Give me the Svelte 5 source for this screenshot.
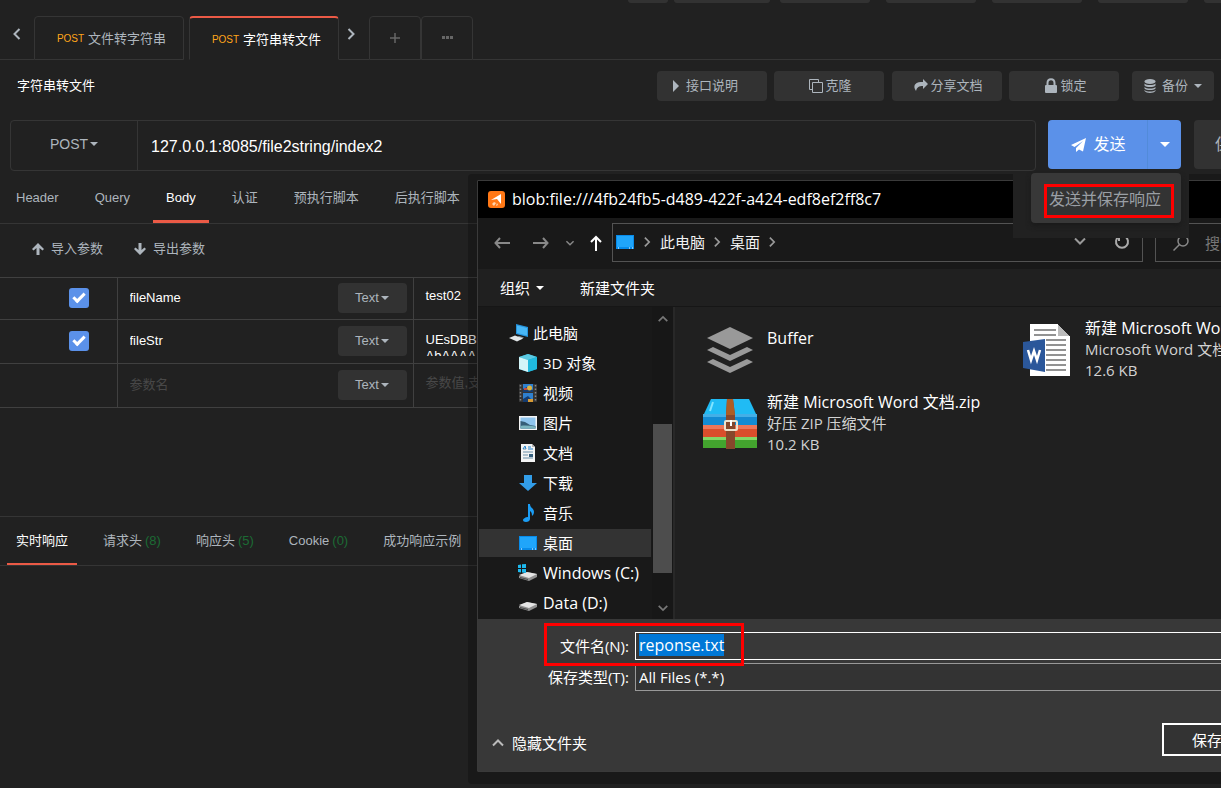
<script>
  import { onMount } from 'svelte';

  let fileInput;
  const peeks = [40, 96, 90, 90, 90, 90, 90];
  const bodyTabs = ['Header', 'Query', 'Body', '认证', '预执行脚本', '后执行脚本'];
  const responseTabs = [
    { name: '实时响应', active: true },
    { name: '请求头', count: 8 },
    { name: '响应头', count: 5 },
    { name: 'Cookie', count: 0 },
    { name: '成功响应示例' }
  ];
  const rows = [
    { name: 'fileName', value: 'test02', checked: true },
    { name: 'fileStr', value: 'UEsDBBQAA\nAbAAAAAAA', checked: true },
    { name: '', value: '', checked: false }
  ];
  const places = [
    { name: '此电脑', icon: 'pc', root: true },
    { name: '3D 对象', icon: 'cube' },
    { name: '视频', icon: 'video' },
    { name: '图片', icon: 'picture' },
    { name: '文档', icon: 'doc' },
    { name: '下载', icon: 'down' },
    { name: '音乐', icon: 'music' },
    { name: '桌面', icon: 'desktop', active: true },
    { name: 'Windows (C:)', icon: 'win', drive: true },
    { name: 'Data (D:)', icon: 'disk', drive: true }
  ];

  onMount(() => {
    fileInput.focus({ preventScroll: true });
    fileInput.select();
  });
</script>

{#snippet chevron(dir, size = 14)}
  <svg class="chev" width={size} height={size} viewBox="0 0 14 14" fill="none" stroke="currentColor" stroke-width="2" aria-hidden="true">
    {#if dir === 'left'}<path d="M9.500 2 4.500 7l5 5" />
    {:else if dir === 'right'}<path d="m4.500 2 5 5-5 5" />
    {:else if dir === 'up'}<path d="m2 9.500 5-5 5 5" />
    {:else}<path d="m2 4.500 5 5 5-5" />{/if}
  </svg>
{/snippet}

{#snippet placeIcon(kind)}
  <svg width="20" height="20" viewBox="0 0 20 20" aria-hidden="true">
    {#if kind === 'pc'}
      <path d="m7 1 12 3v10L7 11z" fill="#2493dc" /><path d="m8 2.500 10 2.500v7.500L8 10z" fill="#48b6f5" />
      <path d="m10 13 5 1.500-3 2-5-1.500z" fill="#8b9499" /><path d="m0 15 6-2.500 8 3-6 3z" fill="#e2e6e8" />
    {:else if kind === 'cube'}
      <path d="m10 1 9 3v12l-9 3-9-3V4z" fill="#19a8cd" /><path d="m10 1 9 3-9 3-9-3z" fill="#5bc9e2" />
      <path d="M1 4l9 3v12l-9-3z" fill="#d3f4f8" /><path d="m10 7 9-3v12l-9 3z" fill="#20b9dd" />
    {:else if kind === 'video'}
      <path d="M1 1h18v18H1z" fill="#343434" /><path d="M5 1h10v8H5zm0 9h10v9H5z" fill="#2f80ce" />
      <path d="M5 6l4-2 6 3v2H5zm0 10 5-3 5 5v1H5z" fill="#153c6f" /><circle cx="11.500" cy="5" r="2.500" fill="#dfb53f" /><path d="M10 16h5v3h-5z" fill="#d89b36" /><path d="M6 5h3v2H6z" fill="#c74943" />
      <path d="M2.500 2v17M17.500 2v17" stroke="#888" stroke-width="1.500" stroke-dasharray="1.500 2" />
    {:else if kind === 'picture'}
      <path d="M1 3h18v14H1z" fill="#f5f5f5" /><path d="M2.500 4.500h15v11h-15z" fill="#8fc5ee" />
      <path d="M2.500 8 7 9l5 3 5.500 1v2.500h-15z" fill="#365e78" /><path d="M2.500 13c5-1 10 0 15 .500v2h-15z" fill="#7bb5bf" />
    {:else if kind === 'doc'}
      <path d="M3 1h11l3 3v15H3z" fill="#f4f4f4" /><path d="M14 1v3h3z" fill="#b5b5b5" />
      <path d="M5 6h3M5 9h10M5 12h5M5 15h10" stroke="#6b8fa8" /><path d="m5 6 2-3 1 3M10 4h3M10 6h5" stroke="#2083cf" fill="none" /><path d="M11 11h4v3h-4z" fill="#345e7c" />
    {:else if kind === 'down'}
      <path d="M6 2h8v8h5l-9 8-9-8h5z" fill="#329de8" />
    {:else if kind === 'music'}
      <path d="M10 1h2c0 4 4 4 4 8 0 2-1 3-2 4 0-4-1-4-2-5v8c0 2-2 3-4 3s-3-1-3-2 2-3 5-3z" fill="#1b9df4" />
    {:else if kind === 'desktop'}
      <path d="M1 3h18v14H1z" fill="#078bea" /><path d="M2 4h16v11H2z" fill="#20a5fa" /><path d="M3 16h1M14 16h1M17 16h1" stroke="#fff" />
    {:else}
      <path d="m1 13 8-4 10 2v3l-8 4-10-3z" fill="#919191" /><path d="m1 12 8-3 10 2-8 4z" fill="#e6e6e6" /><path d="m2 14 8 2v1l-8-2z" fill="#4b4b4b" />
      {#if kind === 'win'}<path d="m0 2 3-.500v3.500H0zm4-.700L8 1v4H4zM0 6h3v3.500L0 9zm4 0h4v4l-4-.500z" fill="#1cb8ee" />{/if}
    {/if}
  </svg>
{/snippet}

<main class="client">
  <div class="peeks" aria-hidden="true">
    {#each peeks as width}<i style:width="{width}px"></i>{/each}
  </div>

  <nav class="tabs" aria-label="接口">
    <button class="arrow prev" aria-label="向左">{@render chevron('left')}</button>
    <button class="tab"><b>POST</b><span>文件转字符串</span></button>
    <button class="tab current"><b>POST</b><span>字符串转文件</span></button>
    <button class="arrow next" aria-label="向右">{@render chevron('right')}</button>
    <button class="mini" aria-label="新建"><svg width="10" height="10" viewBox="0 0 10 10" stroke="currentColor" stroke-width="1.500"><path d="M5 0v10M0 5h10" /></svg></button>
    <button class="mini more" aria-label="更多"><svg width="12" height="4" viewBox="0 0 12 4" fill="currentColor"><path d="M1 0h3v3H1zm4 0h3v3H5zm4 0h3v3H9z" /></svg></button>
    <div class="rest"></div>
  </nav>

  <header class="heading">
    <h1>字符串转文件</h1>
    <div class="actions">
      <button><svg width="8" height="12" viewBox="0 0 8 12" fill="currentColor"><path d="m1 0 6 6-6 6z" /></svg><span>接口说明</span></button>
      <button class="tight"><svg width="14" height="14" viewBox="0 0 14 14" fill="none" stroke="currentColor"><path d="M3.500 10.500h-3V.500h9v3M3.500 3.500h10v10h-10z" /></svg><span>克隆</span></button>
      <button class="tight share"><svg width="14" height="13" viewBox="0 0 14 13" fill="currentColor"><path d="m9 0 5 5-5 5V7C5 7 3 8 2 12 0 9 0 7 1 5.500 3 3 6 3 9 3z" /></svg><span>分享文档</span></button>
      <button class="tight"><svg width="14" height="16" viewBox="0 0 14 16"><path d="M3.500 8V5c0-5 7-5 7 0v3" stroke="currentColor" stroke-width="2" fill="none" /><rect x="1" y="7" width="12" height="8" rx="1" fill="currentColor" /></svg><span>锁定</span></button>
      <button class="backup"><svg width="12" height="14" viewBox="0 0 12 14" fill="currentColor"><ellipse cx="6" cy="2.500" rx="5.500" ry="2.500" /><path d="M.500 4.500c2 2 9 2 11 0v2c-2 2-9 2-11 0zm0 3.500c2 2 9 2 11 0v1.500c-2 2-9 2-11 0zm0 3c2 2 9 2 11 0v1c-2 2.500-9 2.500-11 0z" /></svg><span>备份</span><i class="caret"></i></button>
    </div>
  </header>

  <section class="request">
    <div class="address">
      <button class="method">POST<i class="caret"></i></button>
      <input aria-label="请求地址" value="127.0.0.1:8085/file2string/index2" />
    </div>
    <div class="send-group">
      <button class="send"><svg width="16" height="14" viewBox="0 0 16 14" fill="currentColor"><path d="M15 0 0 7l3.500 2L12 3 5 10v4l3-2.500 4 2z" /></svg><span>发送</span></button>
      <button class="send-more" aria-label="更多发送方式"><i class="caret"></i></button>
      <div class="menu"><div class="menu-panel"><button>发送并保存响应</button></div></div>
    </div>
    <button class="save">保存</button>
  </section>

  <nav class="body-tabs">
    {#each bodyTabs as tab}<button class:active={tab === 'Body'}>{tab}</button>{/each}
  </nav>

  <div class="transfer">
    <button><svg width="12" height="12" viewBox="0 0 12 12" fill="currentColor"><path d="m6 0 6 6-1.500 1.500L7.500 5v7h-3V5l-3 2.500L0 6z" /></svg>导入参数</button>
    <button><svg width="12" height="12" viewBox="0 0 12 12" fill="currentColor"><path d="m6 12 6-6-1.500-1.500-3 2.500V0h-3v7l-3-2.500L0 6z" /></svg>导出参数</button>
  </div>

  <table class="params">
    <tbody>
      {#each rows as row, i}
        <tr>
          <td class="check">{#if row.name}<input type="checkbox" checked={row.checked} aria-label="启用 {row.name}" />{/if}</td>
          <td class="name"><div><input value={row.name} placeholder="参数名" aria-label="参数名 {i + 1}" /><button>Text<i class="caret"></i></button></div></td>
          <td class="value"><textarea class:long={i === 1} value={row.value} placeholder="参数值,支持mock字段变量" aria-label="参数值 {i + 1}"></textarea></td>
        </tr>
      {/each}
    </tbody>
  </table>

  <nav class="response-tabs">
    {#each responseTabs as tab}
      <button class:active={tab.active}>{tab.name}{#if tab.count !== undefined}<em>({tab.count})</em>{/if}</button>
    {/each}
  </nav>
</main>

<section class="dialog" aria-label="另存为">
  <header class="caption">
    <svg width="18" height="18" viewBox="0 0 18 18"><rect x="0" y="1" width="17" height="17" rx="3" fill="#ff7816" /><path d="M13 4v10L9 9l-6 1z" fill="#fff" /><path d="m6 12 2 1-2 3-2-2zm3 1 1 2-2 1z" fill="#ffd4ae" /></svg>
    <span>blob:file:///4fb24fb5-d489-422f-a424-edf8ef2ff8c7</span>
  </header>
  <div class="navigation">
    <div class="history">
      <button aria-label="后退"><svg width="16" height="14" viewBox="0 0 16 14" fill="none" stroke="currentColor" stroke-width="2"><path d="M6 2 1.500 7 6 12M1.500 7H16" /></svg></button>
      <button aria-label="前进"><svg width="16" height="14" viewBox="0 0 16 14" fill="none" stroke="currentColor" stroke-width="2"><path d="m10 2 4.500 5-4.500 5M14.500 7H0" /></svg></button>
      <button aria-label="最近">{@render chevron('down', 10)}</button>
      <button class="up" aria-label="向上"><svg width="12" height="16" viewBox="0 0 12 16" fill="none" stroke="currentColor" stroke-width="2"><path d="M1 7 6 2l5 5M6 2v14" /></svg></button>
    </div>
    <div class="path">
      {@render placeIcon('desktop')}
      {@render chevron('right', 12)}<span>此电脑</span>
      {@render chevron('right', 12)}<span>桌面</span>
      {@render chevron('right', 12)}
      <div class="path-end">{@render chevron('down', 14)}
        <svg width="16" height="16" viewBox="0 0 16 16" fill="none" stroke="currentColor" stroke-width="2"><path d="M11 2.500A6 6 0 1 1 5 2.500M5 7V2H1" /></svg>
      </div>
    </div>
    <label class="search"><svg width="16" height="16" viewBox="0 0 16 16" fill="none" stroke="currentColor" stroke-width="1.500"><circle cx="10" cy="6" r="5" /><path d="m6.500 9.500-6 6" /></svg><input placeholder="搜索" aria-label="搜索" /></label>
  </div>
  <div class="commands"><button>组织<i class="caret"></i></button><button>新建文件夹</button></div>
  <div class="browser">
    <aside>
      <ul>
        {#each places as place}
          <li class:root={place.root} class:active={place.active} class:drive={place.drive}>{@render placeIcon(place.icon)}<span>{place.name}</span></li>
        {/each}
      </ul>
      <div class="scroll" aria-hidden="true">{@render chevron('up', 12)}<i></i>{@render chevron('down', 12)}</div>
    </aside>
    <div class="files">
      <article>
        <svg width="56" height="56" viewBox="0 0 56 56" fill="#999"><path d="m28 5 23 11-23 11L5 16z" /><path d="m5 28 6-3 17 8 17-8 6 3-23 11zm0 12 6-3 17 8 17-8 6 3-23 11z" /></svg>
        <div class="solo"><strong>Buffer</strong></div>
      </article>
      <article>
        <svg width="56" height="56" viewBox="0 0 56 56"><path d="M10 2h28l12 12v40H10z" fill="#fff" /><path d="m38 2 12 12H38z" fill="#bbb" /><path d="m38 2 12 12" stroke="#212121" /><path d="M14 8h22M14 13h22M26 18h20M26 23h20M26 28h20M26 33h20M26 38h20M26 43h20M26 48h20" stroke="#929292" stroke-width="2" /><path d="m3 20 22-3v33L3 46z" fill="#2b579a" /><path d="m8 28 3 10 3-9 3 9 3-10" fill="none" stroke="#fff" stroke-width="2.500" /></svg>
        <div><strong>新建 Microsoft Word 文档.docx</strong><span>Microsoft Word 文档</span><span>12.6 KB</span></div>
      </article>
      <article>
        <svg width="56" height="56" viewBox="0 0 56 56"><path d="M9 3h38l8 17H1z" fill="#20bbf4" /><path d="M1 19h54v10H1z" fill="#138bd3" /><path d="M1 18h54v3H1z" fill="#43afe7" /><path d="M1 29h54v12H1z" fill="#da4e2b" /><path d="M1 29h54v4H1z" fill="#ed7659" /><path d="M1 41h54v11H1z" fill="#43a42e" /><path d="M1 41h54v3H1z" fill="#84d865" /><path d="m25 3h6l2 16v34h-9V19z" fill="#87472b" /><path d="M25 3h6l2 16h-9z" fill="#ae5d25" /><rect x="23" y="25" width="12" height="9" rx="1" fill="none" stroke="#ede2cd" stroke-width="2" /><path d="M29 24v6" stroke="#fff" stroke-width="2" /><path d="m11 6-3 9" stroke="#82e5ff" stroke-width="2" /></svg>
        <div><strong>新建 Microsoft Word 文档.zip</strong><span>好压 ZIP 压缩文件</span><span>10.2 KB</span></div>
      </article>
    </div>
  </div>
  <footer>
    <div class="field"><label for="file-name">文件名(N):</label><input id="file-name" bind:this={fileInput} value="reponse.txt" /><i class="mark"></i></div>
    <div class="field kind"><label for="file-kind">保存类型(T):</label><select id="file-kind"><option>All Files (*.*)</option></select></div>
    <div class="bottom"><button class="hide">{@render chevron('up', 14)}隐藏文件夹</button><button class="confirm">保存</button></div>
  </footer>
</section>

<style>
  :global(body) { background: #212121; }
  :global(#app) { position: relative; min-height: 100vh; overflow: clip; font: 13px/20px "Liberation Sans", "Noto Sans CJK SC", sans-serif; color: #adb5bd; }
  :global(#app *) { box-sizing: border-box; }
  button, input, select, textarea { font: inherit; color: inherit; background: none; border: 0; padding: 0; margin: 0; outline: 0; border-radius: 0; min-width: 0; }
  button { display: flex; align-items: center; justify-content: center; white-space: nowrap; }
  svg { display: block; flex: none; }
  .caret { display: inline-block; flex: none; border: 4px solid transparent; border-top-color: currentColor; border-bottom: 0; }

  .peeks { display: flex; justify-content: flex-end; gap: 16px; height: 3px; margin-right: -73px; }
  .peeks i { flex: none; background: #323232; border-radius: 0 0 4px 4px; }
  .peeks i:nth-child(2) { margin: 0 -6px 0 -10px; }

  .tabs { display: flex; height: 57px; padding-top: 13px; }
  .tabs > * { border: 0 solid #353535; border-bottom-width: 1px; }
  .arrow { color: #adb5bd; padding-bottom: 8px; }
  .prev { width: 34px; }
  .next { width: 30px; padding-right: 6px; }
  .tab { width: 150px; margin-right: 5px; gap: 4px; border-width: 1px; border-radius: 4px 4px 0 0; padding: 2px 0 0 5px; }
  .tab b { font-weight: 400; font-size: 10px; color: #ffa51a; }
  .tab.current { margin: 0; color: #fff; border-top: 2px solid #eb5a46; border-bottom-color: transparent; }
  .mini { width: 52px; color: #666; border-width: 1px; border-radius: 4px 4px 0 0; }
  .rest { flex: 1; }

  .heading { display: flex; align-items: flex-start; justify-content: space-between; height: 60px; padding: 11px 7px 0 17px; }
  h1 { font: inherit; line-height: 30px; margin: 0; color: #fff; }
  .actions { display: flex; gap: 7px; }
  .actions button { width: 110px; height: 30px; gap: 6px; background: #323232; border-radius: 4px; padding-bottom: 1px; }
  .actions .tight { gap: 2px; padding-left: 3px; }
  .actions .share { margin-left: 1px; }
  .actions .backup { width: 82px; margin-left: 6px; }
  .actions button:first-child { padding-right: 14px; }

  .request { display: flex; height: 51px; padding-left: 10px; margin-right: -49px; }
  .address { display: flex; flex: 1; border: 1px solid #353535; border-radius: 4px; }
  .method { width: 127px; gap: 2px; border-right: 1px solid #353535; font-size: 14px; padding-bottom: 4px; }
  .address input { flex: 1; padding: 2px 13px 0; font-size: 16px; color: #fff; }
  .send-group { position: relative; display: flex; width: 133px; height: 49px; margin: 0 13px 0 12px; color: #fff; background: #5b91e9; border-radius: 4px; font-size: 16px; }
  .send { flex: 1; gap: 6px; padding-left: 2px; }
  .send-more { width: 34px; border-left: 1px solid #528bd9; }
  .send-more .caret { border-width: 5px 5px 0; }
  .save { width: 76px; height: 49px; padding-right: 2px; background: #323232; border-radius: 4px; font-size: 16px; }
  .menu { position: absolute; z-index: 4; top: 53px; right: -8px; padding: 0 8px 15px 18px; background: #212121; }
  .menu-panel { width: 150px; padding: 11px 7px 5px 13px; background: #383838; border-radius: 4px; box-shadow: 0 3px 5px #1a1a1a; }
  .menu-panel button { width: 130px; height: 34px; padding: 0 8px 2px 0; border: 3px solid #f00; color: #9a9fa5; font-size: 16px; background: #333; }

  .body-tabs { display: flex; gap: 10px; height: 53px; padding-left: 3px; border-bottom: 1px solid #353535; }
  .body-tabs button { padding: 5px 13px 0; border-bottom: 3px solid transparent; }
  .body-tabs .active { color: #fff; border-color: #eb5a46; }
  .transfer { display: flex; gap: 31px; height: 53px; padding-left: 32px; }
  .transfer button { gap: 7px; padding-bottom: 3px; }

  .params { width: 100%; border-collapse: collapse; table-layout: fixed; border-top: 1px solid #404040; }
  .params tr { height: 44px; border-bottom: 1px solid #404040; }
  .params tr:first-child { height: 42px; }
  .params td { padding: 0 0 2px; }
  .params .check { width: 117px; padding-left: 69px; }
  .check input { appearance: none; width: 20px; height: 20px; border-radius: 3px; background: #5b91e9; display: grid; place-items: center; }
  .check input:checked::after { content: ""; width: 9px; height: 4px; border: solid #fff; border-width: 0 0 3px 3px; transform: translateY(-1px) rotate(-45deg); }
  .name { width: 296px; border: solid #404040; border-width: 0 1px; }
  .name div { display: flex; align-items: center; justify-content: space-between; padding: 0 6px 0 12px; }
  .name input, .value textarea { color: #fff; }
  .name input { width: 180px; }
  .name button { width: 69px; height: 30px; gap: 2px; background: #323232; border-radius: 4px; }
  .name input::placeholder, textarea::placeholder { color: #484848; opacity: 1; }
  .value textarea { display: block; width: 100%; height: 24px; resize: none; overflow: hidden; padding: 0 12px; line-height: 20px; }
  .value .long { line-height: 16px; margin-top: 6px; }

  .response-tabs { display: flex; gap: 17px; height: 50px; margin-top: 108px; padding-left: 7px; border: solid #353535; border-width: 1px 0; }
  .response-tabs button { padding: 1px 9px 0; border-bottom: 2px solid transparent; }
  .response-tabs .active { color: #fff; border-color: #eb5a46; }
  .response-tabs em { font-style: normal; color: #1c6b34; margin-left: 3px; }

  .dialog { position: absolute; z-index: 2; top: 180px; left: 477px; right: -60px; border: 1px solid #3a3a3a; border-radius: 1px; box-shadow: 0 3px 0 9px #0000003d; background: #191919; color: #fff; font: 15px/20px "Open Sans", "Noto Sans CJK SC", sans-serif; }
  .send-group { z-index: 3; }
  .caption { display: flex; align-items: center; gap: 6px; height: 37px; padding: 0 0 2px 10px; background: #000; font-size: 16px; }
  .navigation { display: flex; align-items: center; height: 51px; padding-bottom: 2px; }
  .history { display: flex; width: 134px; padding-left: 16px; color: #888; }
  .history button:nth-child(2) { margin-left: 23px; }
  .history button:nth-child(3) { margin-left: 16px; }
  .history .up { margin-left: 15px; color: #fff; }
  .path { display: flex; align-items: center; flex: 1; height: 39px; border: 1px solid #535353; padding: 0 12px 2px 2px; color: #f1f1f1; }
  .path .chev { margin: 0 7px 0 6px; color: #999; }
  .path-end { display: flex; gap: 27px; margin-left: auto; color: #aaa; }
  .path-end .chev { margin: 0; }
  .search { display: flex; align-items: center; gap: 16px; width: 125px; height: 39px; margin-left: 12px; border: 1px solid #535353; padding-left: 17px; color: #888; }
  .search input { width: 60px; }
  .search input::placeholder { color: #777; }
  .commands { display: flex; gap: 36px; height: 38px; padding-left: 22px; background: #202020; border-bottom: 1px solid #161616; }
  .commands button { gap: 6px; }
  .browser { display: flex; height: 312px; background: #202020; }
  aside { display: flex; width: 197px; flex: none; background: #191919; border-right: 2px solid #282828; }
  ul { flex: 1; margin: 0; padding: 12px 1px 0; list-style: none; overflow: hidden; }
  li { display: flex; align-items: center; gap: 5px; height: 28px; margin-bottom: 2px; padding-left: 39px; white-space: nowrap; }
  li.root { padding-left: 30px; gap: 4px; }
  li.active { background: #333; }
  li.drive { font-size: 16px; }
  .scroll { display: flex; flex-direction: column; align-items: center; justify-content: space-between; width: 21px; padding: 6px 0 5px; background: #171717; color: #777; }
  .scroll i { width: 19px; height: 149px; margin-top: 93px; margin-bottom: 23px; background: #4d4d4d; }
  .files { display: grid; grid-template-columns: 318px 320px; align-content: start; row-gap: 11px; flex: 1; padding: 11px 0 0 27px; overflow: hidden; }
  article { display: flex; align-items: center; gap: 9px; height: 63px; white-space: nowrap; }
  article div { display: flex; flex-direction: column; }
  article strong { font-weight: 400; font-size: 16px; line-height: 21px; }
  article span { color: #d2d2d2; line-height: 21px; }
  article .solo { padding-bottom: 23px; }
  footer { height: 152px; padding-top: 13px; background: #383838; }
  .field { position: relative; display: flex; }
  .field label { width: 151px; margin-right: 6px; line-height: 28px; text-align: right; }
  .field input { flex: 1; height: 28px; padding: 0 3px 2px; border: 1px solid #fff; font-size: 16px; }
  .field input::selection { background: #0078d7; color: #fff; }
  .mark { position: absolute; z-index: 1; top: -9px; left: 66px; width: 200px; height: 43px; border: 3px solid #f00; pointer-events: none; }
  .kind { margin-top: 3px; }
  .field select { appearance: none; flex: 1; height: 28px; padding: 0 3px; border: 1px solid #999; background: #333; }
  .bottom { display: flex; align-items: center; justify-content: space-between; height: 33px; margin-top: 32px; padding: 0 28px 0 13px; }
  .hide { gap: 7px; margin-top: 6px; }
  .hide .chev { color: #bbb; }
  .confirm { width: 90px; height: 33px; border: 2px solid #fff; background: #333; }
</style>
